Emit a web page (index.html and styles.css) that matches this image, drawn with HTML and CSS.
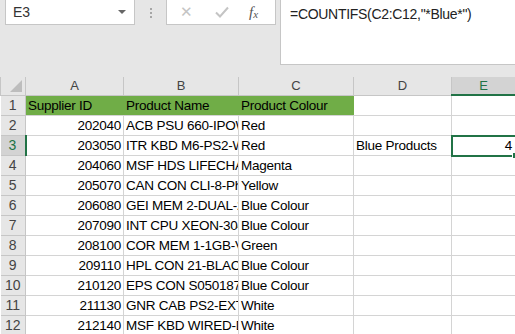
FILE: index.html
```html
<!DOCTYPE html>
<html lang="en">

<head>
    <meta charset="UTF-8">
    <title>COUNTIFS Blue</title>
    <link rel="stylesheet" href="styles.css">
</head>

<body>
    <div class="fbar">
        <div class="namebox">
            <span>E3</span>
            <span class="caret"></span>
        </div>
        <div class="grip"><i></i><i></i><i></i></div>
        <div class="fnbox">
            <span class="cancel">&#x2715;</span>
            <span class="enter">
                <svg width="14" height="12" viewBox="0 0 14 12"><path d="M1 6.5 L5 10.5 L13 1.5" fill="none" stroke="#c4c4c4" stroke-width="2"/></svg>
            </span>
            <span class="fx">f<sub>x</sub></span>
        </div>
        <div class="formula">=COUNTIFS(C2:C12,"*Blue*")</div>
    </div>

    <table class="sheet">
        <colgroup>
            <col class="c-rh">
            <col class="c-a">
            <col class="c-b">
            <col class="c-c">
            <col class="c-d">
            <col class="c-e">
        </colgroup>
        <thead>
            <tr>
                <th class="corner"><span class="tri"></span></th>
                <th>A</th>
                <th>B</th>
                <th>C</th>
                <th>D</th>
                <th class="sel">E</th>
            </tr>
        </thead>
        <tbody>
            <tr>
                <th>1</th>
                <td class="hd">Supplier ID</td>
                <td class="hd">Product Name</td>
                <td class="hd">Product Colour</td>
                <td></td>
                <td></td>
            </tr>
            <tr>
                <th>2</th>
                <td class="num">202040</td>
                <td>ACB PSU 660-IPOW</td>
                <td>Red</td>
                <td></td>
                <td></td>
            </tr>
            <tr>
                <th class="sel">3</th>
                <td class="num">203050</td>
                <td>ITR KBD M6-PS2-W</td>
                <td>Red</td>
                <td>Blue Products</td>
                <td class="num active">4<span class="handle"></span></td>
            </tr>
            <tr>
                <th>4</th>
                <td class="num">204060</td>
                <td>MSF HDS LIFECHAT</td>
                <td>Magenta</td>
                <td></td>
                <td></td>
            </tr>
            <tr>
                <th>5</th>
                <td class="num">205070</td>
                <td>CAN CON CLI-8-Ph</td>
                <td>Yellow</td>
                <td></td>
                <td></td>
            </tr>
            <tr>
                <th>6</th>
                <td class="num">206080</td>
                <td>GEI MEM 2-DUAL-2</td>
                <td>Blue Colour</td>
                <td></td>
                <td></td>
            </tr>
            <tr>
                <th>7</th>
                <td class="num">207090</td>
                <td>INT CPU XEON-304</td>
                <td>Blue Colour</td>
                <td></td>
                <td></td>
            </tr>
            <tr>
                <th>8</th>
                <td class="num">208100</td>
                <td>COR MEM 1-1GB-V</td>
                <td>Green</td>
                <td></td>
                <td></td>
            </tr>
            <tr>
                <th>9</th>
                <td class="num">209110</td>
                <td>HPL CON 21-BLACK</td>
                <td>Blue Colour</td>
                <td></td>
                <td></td>
            </tr>
            <tr>
                <th>10</th>
                <td class="num">210120</td>
                <td>EPS CON S050187</td>
                <td>Blue Colour</td>
                <td></td>
                <td></td>
            </tr>
            <tr>
                <th>11</th>
                <td class="num">211130</td>
                <td>GNR CAB PS2-EXT-</td>
                <td>White</td>
                <td></td>
                <td></td>
            </tr>
            <tr>
                <th>12</th>
                <td class="num">212140</td>
                <td>MSF KBD WIRED-D</td>
                <td>White</td>
                <td></td>
                <td></td>
            </tr>
        </tbody>
    </table>
</body>

</html>
```

FILE: styles.css
```css
body {
    margin: 0;
    padding: 0;
    background: #e6e6e6;
    font-family: 'Liberation Sans', Arial, sans-serif;
    color: #000;
    overflow: hidden;
}

/* formula bar */
.fbar {
    display: flex;
    align-items: flex-start;
    height: 77px;
    padding-left: 5px;
}

.namebox {
    box-sizing: border-box;
    width: 130px;
    height: 25px;
    background: #fff;
    border: 1px solid #c6c6c6;
    border-top: none;
    display: flex;
    align-items: center;
    justify-content: space-between;
    padding: 0 8px 0 7px;
    font-size: 14px;
    color: #333;
}

.caret {
    width: 0;
    height: 0;
    border-left: 4px solid transparent;
    border-right: 4px solid transparent;
    border-top: 4px solid #666;
}

.grip {
    width: 31px;
    height: 25px;
    display: flex;
    flex-direction: column;
    align-items: center;
    justify-content: center;
    gap: 2px;
}

.grip i {
    width: 2px;
    height: 2px;
    background: #a6a6a6;
}

.fnbox {
    box-sizing: border-box;
    width: 110px;
    height: 25px;
    background: #fff;
    border: 1px solid #c6c6c6;
    border-top: none;
    display: flex;
    align-items: center;
    padding-left: 13px;
}

.cancel {
    color: #c4c4c4;
    font-size: 15px;
    width: 35px;
}

.enter {
    width: 34px;
    display: flex;
    align-items: center;
}

.fx {
    font-family: 'Liberation Serif', serif;
    font-style: italic;
    font-size: 15px;
    color: #555;
}

.fx sub {
    font-size: 11px;
    vertical-align: -1px;
}

.formula {
    flex: 1;
    box-sizing: border-box;
    height: 65px;
    margin-left: 4px;
    background: #fff;
    border-left: 1px solid #c6c6c6;
    border-bottom: 1px solid #c6c6c6;
    padding: 6px 0 0 9px;
    font-size: 14px;
    letter-spacing: -0.3px;
    color: #222;
}

/* sheet grid */
.sheet {
    border-collapse: collapse;
    table-layout: fixed;
    width: 515px;
    background: #fff;
    font-size: 13.5px;
    letter-spacing: -0.25px;
}

.c-rh { width: 25px; }
.c-a { width: 98px; }
.c-b { width: 115px; }
.c-c { width: 115px; }
.c-d { width: 98px; }
.c-e { width: 64px; }

.sheet th {
    background: #e6e6e6;
    color: #444;
    font-weight: normal;
    font-size: 14px;
    letter-spacing: 0;
    border: 1px solid #c6c6c6;
    padding: 0;
    text-align: center;
}

.sheet thead th {
    height: 17px;
    border-top: none;
    line-height: 17px;
    font-size: 13px;
}

.sheet tbody th {
    height: 19px;
    border-left: none;
    line-height: 19px;
}

.sheet th.sel {
    background: #d3d3d3;
    color: #217346;
}

.sheet thead th.sel {
    border-bottom: 2px solid #217346;
}

.sheet tbody th.sel {
    border-right: 2px solid #217346;
}

.corner {
    position: relative;
}

.tri {
    position: absolute;
    right: 3px;
    bottom: 3px;
    width: 0;
    height: 0;
    border-left: 12px solid transparent;
    border-bottom: 12px solid #bdbdbd;
}

.sheet td {
    height: 19px;
    border: 1px solid #d4d4d4;
    padding: 0 2px;
    white-space: nowrap;
    overflow: hidden;
    line-height: 19px;
    vertical-align: bottom;
}

.sheet td.hd {
    background: #70ad47;
    border-color: #70ad47;
    border-bottom-color: #d4d4d4;
}

.sheet td.num {
    text-align: right;
}

.sheet td.active {
    position: relative;
    overflow: visible;
    outline: 2px solid #217346;
    outline-offset: -1px;
    padding-right: 3px;
    text-align: right;
}

.handle {
    position: absolute;
    right: -4px;
    bottom: -4px;
    width: 5px;
    height: 5px;
    background: #217346;
    border: 1px solid #fff;
}
```
